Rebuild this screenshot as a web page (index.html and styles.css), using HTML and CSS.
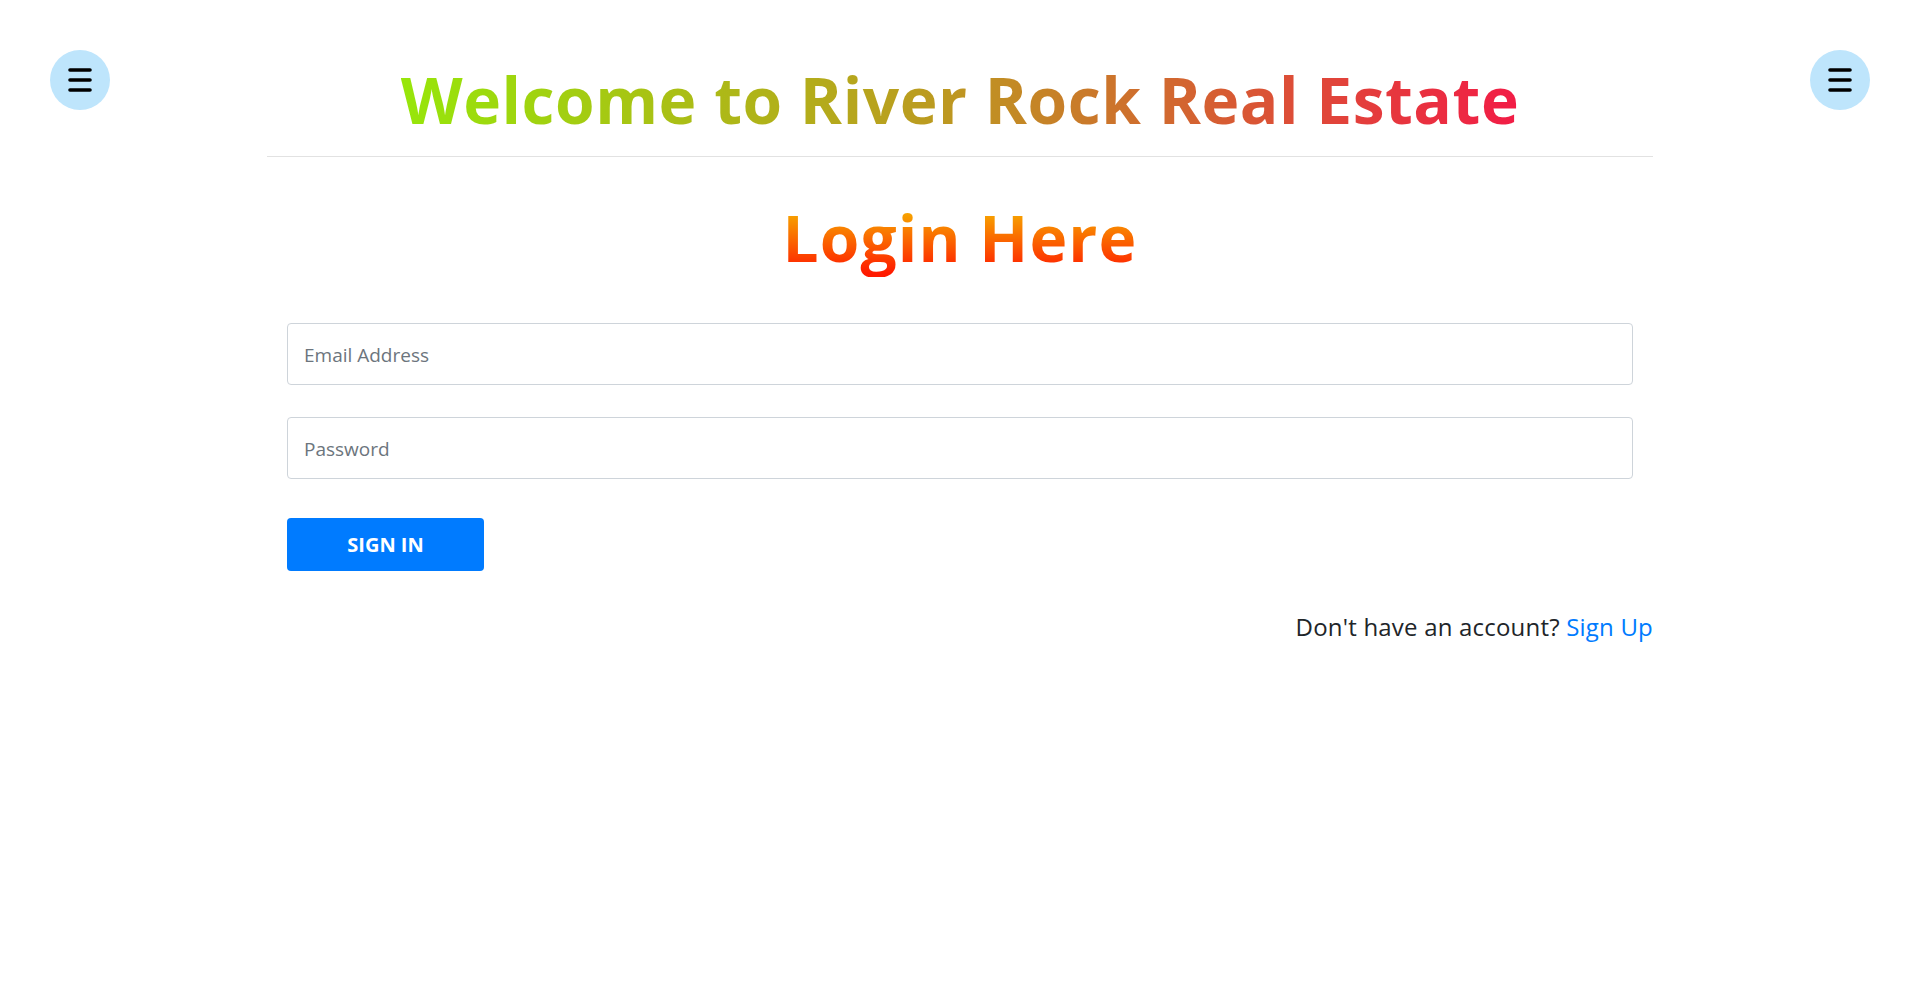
FILE: index.html
```html
<!DOCTYPE html>
<html lang="en">
<head>
<meta charset="utf-8">
<title>River Rock Real Estate - Login</title>
<link rel="stylesheet" href="styles.css">
</head>
<body>
<div class="page">
  <button class="menu-btn" type="button" aria-label="Menu">
    <svg width="24" height="24" viewBox="0 0 24 24"><path d="M2 2h20M2 12h20M2 22h20" stroke="#000" stroke-width="3.6" stroke-linecap="round" fill="none"/></svg>
  </button>
  <main class="container">
    <header class="site-header">
      <h1 class="site-title"><span class="grad-title">Welcome to River Rock Real Estate</span></h1>
    </header>
    <section class="login">
      <h2 class="login-title"><span class="grad-login">Login Here</span></h2>
      <form class="login-form">
        <input class="field" type="email" placeholder="Email Address">
        <input class="field field-pwd" type="password" placeholder="Password">
        <button class="btn-signin" type="button">SIGN IN</button>
      </form>
      <p class="signup">Don't have an account? <a href="#" class="signup-link">Sign Up</a></p>
    </section>
  </main>
  <button class="menu-btn" type="button" aria-label="Menu">
    <svg width="24" height="24" viewBox="0 0 24 24"><path d="M2 2h20M2 12h20M2 22h20" stroke="#000" stroke-width="3.6" stroke-linecap="round" fill="none"/></svg>
  </button>
</div>
</body>
</html>
```

FILE: styles.css
```css
html, body {
  margin: 0;
  padding: 0;
  background: #fff;
}

body {
  font-family: "Open Sans", "Noto Sans", sans-serif;
  color: #212529;
}

.page {
  display: grid;
  grid-template-columns: 60px 1fr 60px;
  align-items: start;
  padding: 50px 50px 0;
  min-height: 940px;
}

.menu-btn {
  width: 60px;
  height: 60px;
  border-radius: 50%;
  border: none;
  background: #bee5fc;
  padding: 0;
  display: flex;
  align-items: center;
  justify-content: center;
  cursor: pointer;
}

.container {
  width: 1386px;
  justify-self: center;
}

.site-header {
  margin-top: 12px;
  padding-bottom: 17px;
  border-bottom: 1px solid #e2e2e2;
  text-align: center;
}

.site-title {
  margin: 0;
  font-size: 64px;
  line-height: 1.2;
  font-weight: 700;
  letter-spacing: 0.55px;
}

.grad-title {
  display: inline-block;
  background: linear-gradient(90deg, #97e60a 0%, #bc9a20 48%, #f21c46 100%);
  -webkit-background-clip: text;
  background-clip: text;
  color: transparent;
}

.login {
  padding: 0 20px;
}

.login-title {
  margin: 43px 0 0;
  text-align: center;
  font-size: 64px;
  line-height: 1.2;
  font-weight: 700;
  letter-spacing: 1.1px;
}

.grad-login {
  display: inline-block;
  background: linear-gradient(180deg, #f6b000 10%, #ff1a00 95%);
  -webkit-background-clip: text;
  background-clip: text;
  color: transparent;
}

.login-form {
  display: flex;
  flex-direction: column;
  align-items: flex-start;
  margin-top: 46px;
}

.field {
  box-sizing: border-box;
  width: 100%;
  height: 62px;
  padding: 2px 16px 0;
  border: 1px solid #ced4da;
  border-radius: 4px;
  font-family: inherit;
  font-size: 19px;
  color: #495057;
  background: #fff;
}

.field::placeholder {
  color: #6c757d;
}

.field-pwd {
  margin-top: 32px;
}

.btn-signin {
  margin-top: 39px;
  width: 197px;
  height: 53px;
  border: none;
  border-radius: 4px;
  background: #007bff;
  color: #fff;
  font-family: inherit;
  font-size: 20px;
  font-weight: 700;
  cursor: pointer;
}

.signup {
  margin: 38px -20px 0 0;
  text-align: right;
  font-size: 24px;
  line-height: 1.5;
  letter-spacing: 0.2px;
  color: #212529;
}

.signup-link {
  color: #007bff;
  text-decoration: none;
}
```
